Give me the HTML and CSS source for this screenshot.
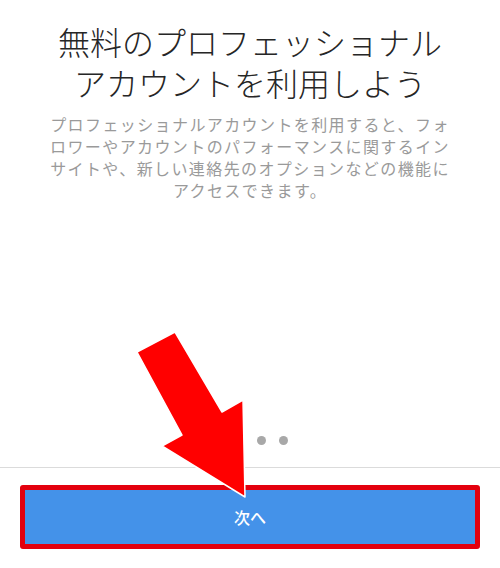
FILE: index.html
```html
<!DOCTYPE html>
<html lang="ja">
<head>
<meta charset="utf-8">
<link rel="stylesheet" href="styles.css">
</head>
<body>
<div class="screen">
  <div class="content">
    <h1 class="title">無料のプロフェッショナル<br>アカウントを利用しよう</h1>
    <p class="desc">プロフェッショナルアカウントを利用すると、フォ<br>ロワーやアカウントのパフォーマンスに関するイン<br>サイトや、新しい連絡先のオプションなどの機能に<br>アクセスできます。</p>
  </div>
  <div class="spacer"></div>
  <div class="dots">
    <span class="dot active"></span>
    <span class="dot"></span>
    <span class="dot"></span>
    <span class="dot"></span>
  </div>
  <div class="divider"></div>
  <div class="footer">
    <button class="next">次へ</button>
  </div>
  <svg class="arrow" width="500" height="568" viewBox="0 0 500 568">
    <polygon points="137,352 175,332 222,412 243,400 245,497 162,446 182,435" fill="#ff0000" stroke="#ffffff" stroke-width="1.5" stroke-linejoin="round"/>
  </svg>
</div>
</body>
</html>
```
FILE: styles.css
```css
html, body {
  margin: 0;
  padding: 0;
  background: #ffffff;
}
.screen {
  position: relative;
  width: 500px;
  height: 568px;
  display: flex;
  flex-direction: column;
  overflow: hidden;
  font-family: "Noto Sans CJK JP", "Noto Sans", sans-serif;
}
.content {
  padding-top: 21px;
  text-align: center;
}
.title {
  margin: 0;
  font-size: 32px;
  line-height: 41px;
  font-weight: 300;
  color: #262626;
}
.desc {
  margin: 10px 0 0;
  font-size: 16px;
  line-height: 22px;
  letter-spacing: 1.4px;
  color: #9a9a9a;
}
.spacer {
  flex: 1;
}
.dots {
  display: flex;
  justify-content: center;
  gap: 13px;
  height: 9px;
  margin-bottom: 22px;
}
.dot {
  width: 9px;
  height: 9px;
  border-radius: 50%;
  background: #a8a8a8;
}
.dot.active {
  background: #3897f0;
}
.divider {
  height: 1px;
  background: #dbdbdb;
}
.footer {
  padding: 17px 20px 19px;
}
.next {
  display: block;
  width: 100%;
  height: 64px;
  box-sizing: border-box;
  border: 5px solid #e3000e;
  border-radius: 3px;
  background: #4492e9;
  color: #ffffff;
  font-family: "Noto Sans CJK JP", "Noto Sans", sans-serif;
  font-size: 16px;
  font-weight: 500;
  padding: 0;
}
.arrow {
  position: absolute;
  left: 0;
  top: 0;
}
```
